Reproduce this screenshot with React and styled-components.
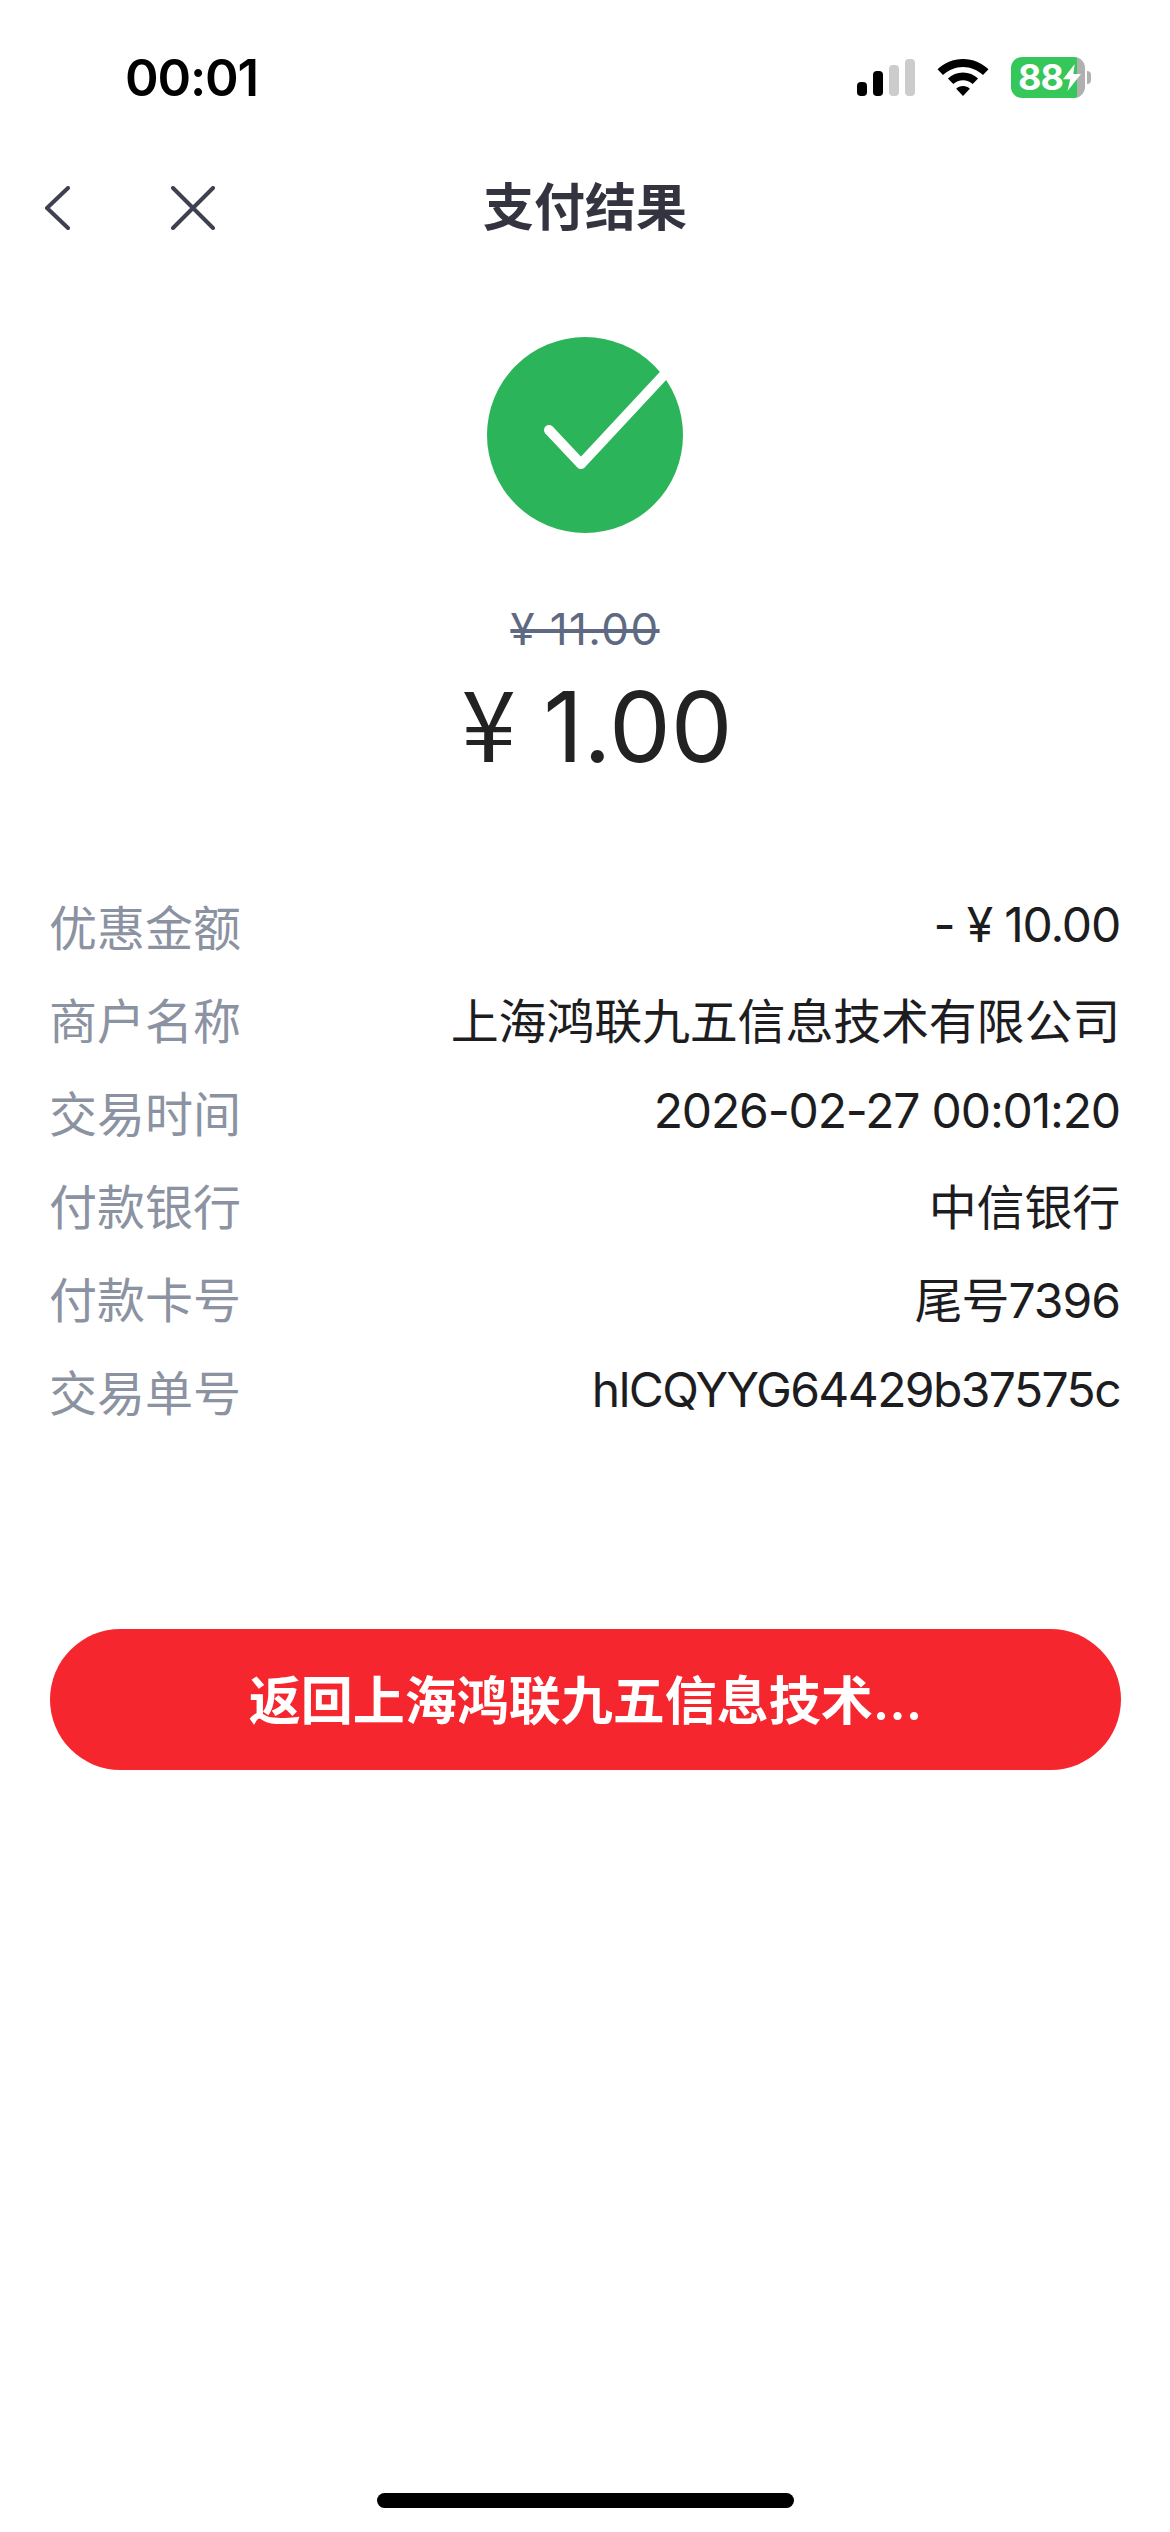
import React from 'react';
import styled, { createGlobalStyle } from 'styled-components';

const GlobalStyle = createGlobalStyle`
  html, body {
    margin: 0;
    padding: 0;
    background: #fff;
  }
  * {
    box-sizing: border-box;
  }
`;

const FONT = `Inter, "Noto Sans CJK SC", "Noto Sans", sans-serif`;

const rows = [
  { label: '优惠金额', value: '- ¥ 10.00', tracking: -1.2 },
  { label: '商户名称', value: '上海鸿联九五信息技术有限公司', tracking: -0.2 },
  { label: '交易时间', value: '2026-02-27 00:01:20', tracking: -1.15 },
  { label: '付款银行', value: '中信银行', tracking: -0.2 },
  { label: '付款卡号', value: '尾号7396', tracking: -1 },
  { label: '交易单号', value: 'hlCQYYG64429b37575c', tracking: -1.6 },
];

const App = () => (
  <Page>
    <GlobalStyle />
    <StatusBar>
      <Clock>00:01</Clock>
      <StatusIcons>
        <SignalBars>
          <Bar $h={14} $on />
          <Bar $h={25} $on />
          <Bar $h={31} />
          <Bar $h={37} />
        </SignalBars>
        <svg width="52" height="38" viewBox="0 0 52 38">
          <path
            fill="#000"
            d="M26 0C16 0 7.400 3.800 0.500 10.200L6 16C11.500 11 18.400 8 26 8C33.600 8 40.500 11 46 16L51.500 10.200C44.600 3.800 36 0 26 0Z"
          />
          <path
            fill="#000"
            d="M26 13.500C20.300 13.500 15 15.700 10.900 19.500L16.300 25.100C18.900 22.700 22.300 21.300 26 21.300C29.700 21.300 33.100 22.700 35.700 25.100L41.100 19.500C37 15.700 31.700 13.500 26 13.500Z"
          />
          <path fill="#000" d="M26 27C23.300 27 20.900 28 19.200 29.700L26 37L32.800 29.700C31.100 28 28.700 27 26 27Z" />
        </svg>
        <Battery>
          <BatteryBody>
            <BatteryLevel>88</BatteryLevel>
            <BoltIcon width="18" height="27" viewBox="0 0 20 30">
              <path fill="#fff" d="M13 0L0 17H8L5 30L20 11H11.500L13 0Z" />
            </BoltIcon>
          </BatteryBody>
          <BatteryNub />
        </Battery>
      </StatusIcons>
    </StatusBar>

    <NavBar>
      <NavButtons>
        <svg width="26" height="44" viewBox="0 0 26 44">
          <path d="M24 2L3 22L24 42" fill="none" stroke="#3f4150" strokeWidth="4" strokeLinecap="round" strokeLinejoin="round" />
        </svg>
        <svg width="44" height="44" viewBox="0 0 44 44">
          <path d="M2 2L42 42M42 2L2 42" fill="none" stroke="#3f4150" strokeWidth="4" strokeLinecap="round" />
        </svg>
      </NavButtons>
      <NavTitle>支付结果</NavTitle>
    </NavBar>

    <ResultBlock>
      <svg width="196" height="196" viewBox="0 0 196 196">
        <circle cx="98" cy="98" r="98" fill="#2cb45a" />
        <path d="M62 93L94 127L182 32.500" fill="none" stroke="#fff" strokeWidth="10" strokeLinejoin="round" />
        <circle cx="62" cy="93" r="5" fill="#fff" />
      </svg>
      <OriginalPrice>¥ 11.00</OriginalPrice>
      <PaidPrice><YenSign>¥</YenSign> 1.00</PaidPrice>
    </ResultBlock>

    <DetailList>
      {rows.map(row => (
        <DetailRow key={row.label}>
          <DetailLabel>{row.label}</DetailLabel>
          <DetailValue $tracking={row.tracking}>{row.value}</DetailValue>
        </DetailRow>
      ))}
    </DetailList>

    <ReturnButton>返回上海鸿联九五信息技术...</ReturnButton>

    <HomeIndicator />
  </Page>
);

export default App;

const Page = styled.div`
  width: 1170px;
  height: 2532px;
  display: flex;
  flex-direction: column;
  background: #fff;
  font-family: ${FONT};
  overflow: hidden;
`;

const StatusBar = styled.div`
  height: 156px;
  padding: 57px 79px 0 125px;
  display: flex;
  justify-content: space-between;
  align-items: flex-start;
`;

const Clock = styled.div`
  font-size: 51px;
  line-height: 42px;
  font-weight: 600;
  color: #000;
  letter-spacing: -1.2px;
`;

const StatusIcons = styled.div`
  display: flex;
  align-items: center;
  gap: 22px;
  height: 41px;
`;

const SignalBars = styled.div`
  display: flex;
  align-items: flex-end;
  gap: 6px;
  height: 37px;
`;

const Bar = styled.span`
  width: 10px;
  height: ${props => props.$h}px;
  border-radius: 4px;
  background: ${props => (props.$on ? '#000' : '#ccc')};
`;

const Battery = styled.div`
  display: flex;
  align-items: center;
  gap: 2px;
`;

const BatteryBody = styled.div`
  width: 74px;
  height: 41px;
  border-radius: 11px;
  padding-left: 7px;
  display: flex;
  align-items: center;
  background: linear-gradient(to right, #35c759 0, #35c759 66px, #b0b0b0 66px);
`;

const BatteryLevel = styled.span`
  font-size: 36px;
  line-height: 41px;
  font-weight: 700;
  letter-spacing: -1px;
  color: #fff;
`;

const BoltIcon = styled.svg`
  flex-shrink: 0;
`;

const BatteryNub = styled.span`
  width: 4px;
  height: 13px;
  border-radius: 0 6px 6px 0;
  background: #b0b0b0;
`;

const NavBar = styled.div`
  position: relative;
  height: 104px;
  display: flex;
  align-items: center;
  justify-content: center;
`;

const NavButtons = styled.div`
  position: absolute;
  left: 44px;
  top: 30px;
  display: flex;
  gap: 101px;
`;

const NavTitle = styled.div`
  font-size: 51px;
  line-height: 60px;
  font-weight: 600;
  color: #33343f;
`;

const ResultBlock = styled.div`
  margin-top: 77px;
  display: flex;
  flex-direction: column;
  align-items: center;
`;

const OriginalPrice = styled.div`
  margin-top: 70px;
  font-size: 44px;
  line-height: 52px;
  letter-spacing: 1.4px;
  color: #5f6a82;
  text-decoration: line-through;
  text-decoration-thickness: 4px;
`;

const PaidPrice = styled.div`
  margin-top: 5px;
  margin-left: 24px;
  font-size: 98px;
  line-height: 118px;
  font-weight: 400;
  color: #222;
`;

const YenSign = styled.span`
  font-family: "Noto Sans CJK SC", sans-serif;
  font-weight: 400;
`;

const DetailList = styled.div`
  margin-top: 92px;
  padding: 0 50px 0 49px;
  display: flex;
  flex-direction: column;
`;

const DetailRow = styled.div`
  height: 93px;
  display: flex;
  justify-content: space-between;
  align-items: center;
`;

const DetailLabel = styled.span`
  font-size: 48px;
  color: #8b92a1;
`;

const DetailValue = styled.span`
  font-size: 48px;
  letter-spacing: ${props => props.$tracking}px;
  color: #1d1d1f;
`;

const ReturnButton = styled.button`
  margin: 193px 49px 0 50px;
  height: 141px;
  padding: 0 0 5px;
  border: none;
  border-radius: 71px;
  background: #f6262e;
  color: #fff;
  font-family: ${FONT};
  font-size: 52px;
  font-weight: 600;
`;

const HomeIndicator = styled.div`
  margin: auto auto 24px;
  width: 417px;
  height: 15px;
  border-radius: 8px;
  background: #000;
`;
